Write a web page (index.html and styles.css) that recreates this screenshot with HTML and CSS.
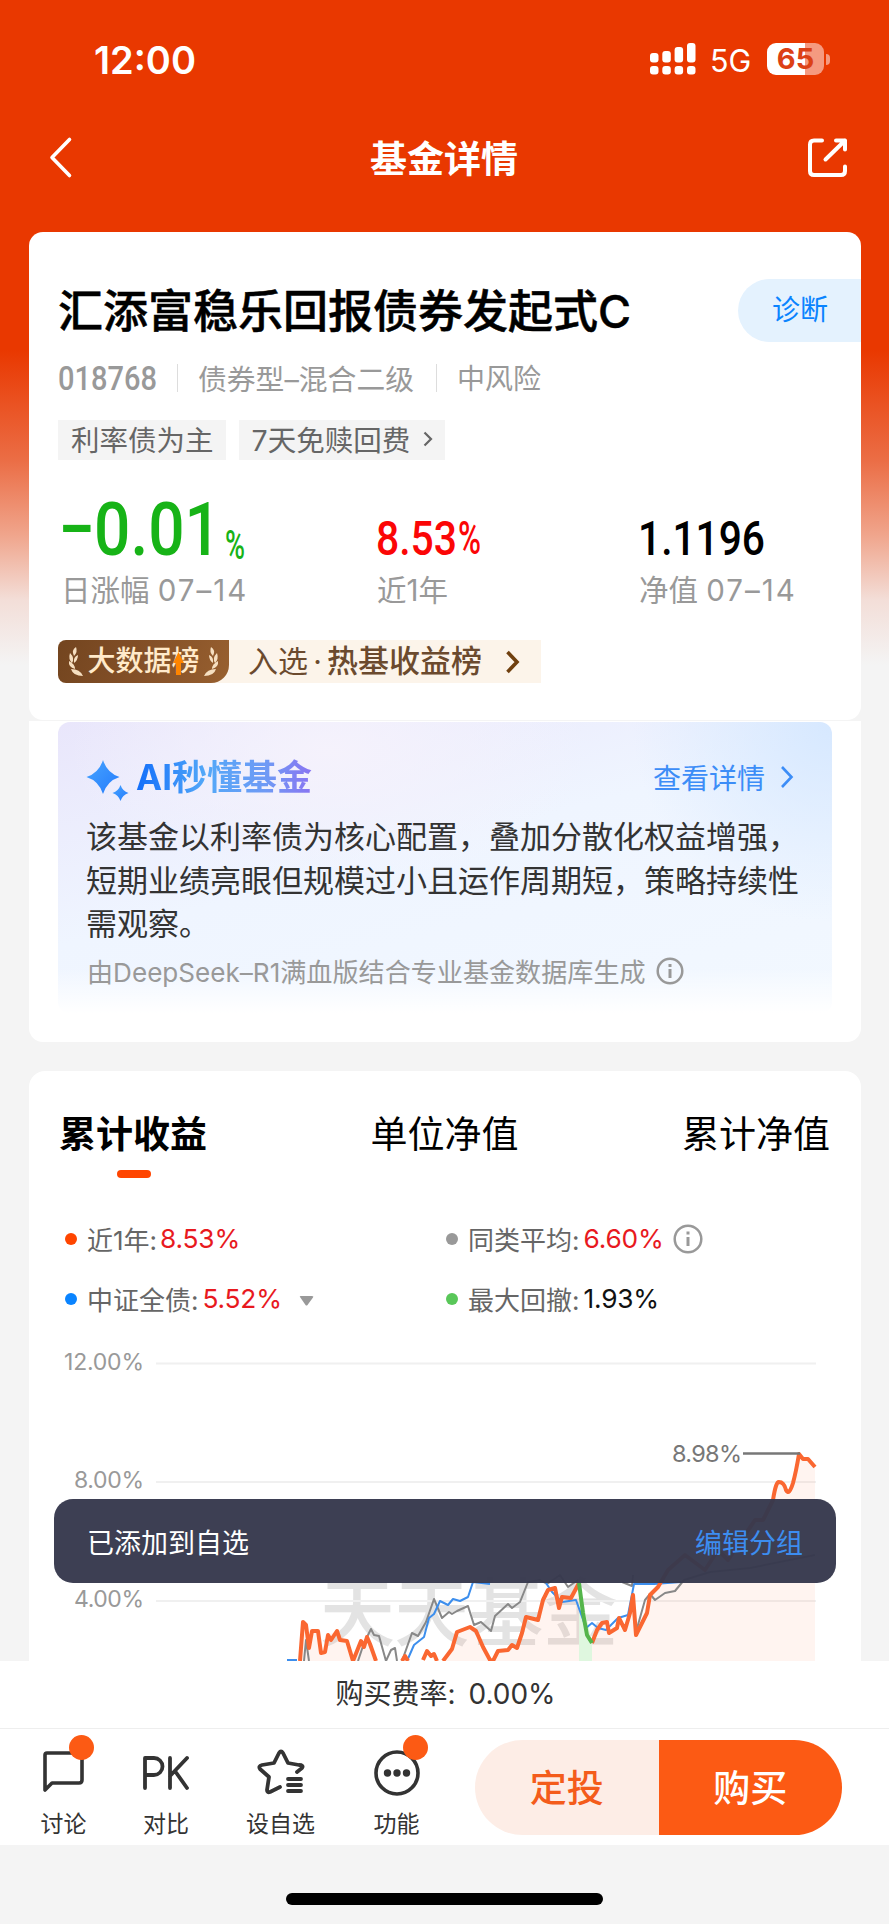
FILE: index.html
```html
<!DOCTYPE html>
<html lang="zh-CN">
<head>
<meta charset="utf-8">
<title>基金详情</title>
<link rel="stylesheet" href="styles.css">
</head>
<body>
<div class="page">
  <header class="header">
    <div class="status">
      <span class="clock">12:00</span>
      <svg class="signal" width="46" height="34" viewBox="0 0 46 34" fill="#fff">
        <rect x="0" y="11" width="8.500" height="9.500" rx="3"/><rect x="12.300" y="9" width="8.500" height="11.500" rx="3"/><rect x="24.600" y="5" width="8.500" height="15.500" rx="3"/><rect x="37" y="1" width="8.500" height="19.500" rx="3"/>
        <rect x="0" y="24" width="8.500" height="8.500" rx="3"/><rect x="12.300" y="24" width="8.500" height="8.500" rx="3"/><rect x="24.600" y="24" width="8.500" height="8.500" rx="3"/><rect x="37" y="24" width="8.500" height="8.500" rx="3"/>
      </svg>
      <span class="network">5G</span>
      <span class="battery">65</span><span class="battery-nub"></span>
    </div>
    <div class="nav">
      <svg class="back" width="24" height="42" viewBox="0 0 24 42" fill="none" stroke="#fff" stroke-width="3.600" stroke-linecap="round" stroke-linejoin="round"><path d="M20.500 2.500 3 20.500 20.500 38.500"/></svg>
      <h1>基金详情</h1>
      <svg class="share" width="42" height="42" viewBox="0 0 42 42" fill="none" stroke="#fff" stroke-width="4" stroke-linecap="round" stroke-linejoin="round"><path d="M15 3.500H7Q3 3.500 3 7.500V34Q3 38 7 38H34Q38 38 38 34V29.500"/><path d="M29 3.500H38V12.500M38 3.500 18.500 22.500"/></svg>
    </div>
  </header>

  <main>
    <section class="card summary">
      <div class="name-row"><h2>汇添富稳乐回报债券发起式C</h2><span class="diagnose">诊断</span></div>
      <div class="meta">
        <svg width="99" height="40"><text class="din" x="0" y="32" font-size="34" fill="#999" textLength="99" lengthAdjust="spacingAndGlyphs">018768</text></svg>
        <i></i><span class="kind">债券型–混合二级</span><i></i><span>中风险</span>
      </div>
      <div class="tags">
        <span class="tag">利率债为主</span>
        <span class="tag">7天免赎回费<svg width="10" height="16" viewBox="0 0 10 16" fill="none" stroke="#666" stroke-width="2.200"><path d="M1.500 1.500 8 8 1.500 14.500"/></svg></span>
      </div>
      <div class="stats">
        <div><svg width="190" height="110"><g class="din" fill="#17b317"><text x="-4" y="92" font-size="76" textLength="36" lengthAdjust="spacingAndGlyphs">-</text><text x="31" y="95" font-size="75" textLength="127" lengthAdjust="spacingAndGlyphs">0.01</text><text x="162" y="99" font-size="41" textLength="20" lengthAdjust="spacingAndGlyphs">%</text></g></svg><p>日涨幅 <span>07–14</span></p></div>
        <div><svg width="190" height="110"><g class="din" fill="#fb0606"><text x="-1" y="95" font-size="49" textLength="81" lengthAdjust="spacingAndGlyphs">8.53</text><text x="81" y="94" font-size="47" textLength="23" lengthAdjust="spacingAndGlyphs">%</text></g></svg><p>近1年</p></div>
        <div><svg width="190" height="110"><text class="din" x="-1" y="95" font-size="49" fill="#000" textLength="127" lengthAdjust="spacingAndGlyphs">1.1196</text></svg><p>净值 <span>07–14</span></p></div>
      </div>
      <div class="rank">
        <div class="rank-badge">
          <svg width="14" height="30" viewBox="0 0 14 30" fill="#f6dfc0"><path d="M7 0Q2 3 5 9 9 5 7 0ZM1 6Q-1 12 3 16 6 11 1 6ZM9 8Q4 10 5 16 9 13 9 8ZM0 14Q-1 20 6 22 6 17 0 14ZM2 22Q4 29 14 29 11 22 2 22Z"/></svg>
          <span>大数据榜</span>
          <svg class="arrow-up" width="11" height="23" viewBox="0 0 11 23" fill="#ff8500"><path d="M5.500 0 11 11H8V23H3V11H0Z"/></svg>
          <svg class="flip" width="14" height="30" viewBox="0 0 14 30" fill="#f6dfc0"><path d="M7 0Q2 3 5 9 9 5 7 0ZM1 6Q-1 12 3 16 6 11 1 6ZM9 8Q4 10 5 16 9 13 9 8ZM0 14Q-1 20 6 22 6 17 0 14ZM2 22Q4 29 14 29 11 22 2 22Z"/></svg>
        </div>
        <span class="rank-in">入选</span><span class="rank-dot">·</span><b>热基收益榜</b>
        <svg class="rank-go" width="15" height="24" viewBox="0 0 15 24" fill="none" stroke="#70400f" stroke-width="3.600"><path d="M2.500 2 12 12 2.500 22"/></svg>
      </div>
    </section>

    <section class="ai-card">
      <div class="ai-panel">
        <div class="ai-head">
          <svg width="44" height="44" viewBox="0 0 44 44"><defs><linearGradient id="spark" x1="0" y1="0" x2="1" y2="1"><stop offset="0" stop-color="#47a4ff"/><stop offset="1" stop-color="#247bfc"/></linearGradient></defs><g fill="url(#spark)"><path d="M16 0Q20 13 32.500 17 20 21 16 34 12 21-.500 17 12 13 16 0Z"/><path d="M33.500 25Q35.500 31 41.500 33 35.500 35 33.500 41 31.500 35 25.500 33 31.500 31 33.500 25Z"/></g></svg>
          <h3>AI秒懂基金</h3>
          <a>查看详情</a>
          <svg class="ai-go" width="14" height="24" viewBox="0 0 14 24" fill="none" stroke="#3c8df7" stroke-width="2.600"><path d="M2 2 11.500 12 2 22"/></svg>
        </div>
        <p class="ai-text">该基金以利率债为核心配置，叠加分散化权益增强，<br>短期业绩亮眼但规模过小且运作周期短，策略持续性<br>需观察。</p>
        <p class="ai-source"><span>由DeepSeek–R1满血版结合专业基金数据库生成</span><svg width="28" height="28" viewBox="0 0 28 28"><circle cx="14" cy="14" r="12.300" fill="none" stroke="#999" stroke-width="2.500"/><path d="M14 12v9M14 7v3" stroke="#999" stroke-width="3"/></svg></p>
      </div>
    </section>

    <section class="chart-card">
      <nav class="tabs"><b>累计收益</b><span>单位净值</span><span>累计净值</span></nav>
      <div class="legend">
        <div><i class="dot orange"></i>近1年:<em class="v1">8.53%</em></div>
        <div><i class="dot gray"></i>同类平均:<em class="v3">6.60%</em><svg width="30" height="30" viewBox="0 0 30 30"><circle cx="15" cy="15" r="13.300" fill="none" stroke="#999" stroke-width="2.500"/><path d="M15 13v9M15 7.500v3" stroke="#999" stroke-width="3"/></svg></div>
        <div><i class="dot blue"></i>中证全债:<em class="v2">5.52%</em><svg class="caret" width="15" height="10"><path d="M1 1Q0 0 2 0H13Q15 0 14 1.500L8.500 9Q7.500 10 6.500 9Z" fill="#999"/></svg></div>
        <div><i class="dot green"></i>最大回撤:<em class="v4">1.93%</em></div>
      </div>
      <svg class="chart" width="832" height="332" viewBox="29 1329 832 332">
        <text class="watermark" x="320" y="1640" font-size="75" textLength="298">天天基金</text>
        <path stroke="#f0f0f0" stroke-width="2" d="M156 1363.500H816M156 1482H816M156 1601H816"/>
        <path fill="#ff6a30" fill-opacity=".07" d="M300 1661 303 1621 309 1648 312 1631 318 1631 321 1653 328 1635 337 1631 347 1641 353 1661 361 1641 367 1637 376 1661ZM443 1661 452 1649 457 1632 470 1627 490 1661 498 1651 517 1648 526 1617 538 1620 548 1590 559 1608 579 1583 592 1643 602 1623 625 1630 633 1595 636 1635 650 1595 668 1570 685 1555 705 1570 718 1550 755 1520 773 1500 778 1482 788 1493 799 1454 815 1467V1661Z"/>
        <path fill="#dff7df" d="M579 1583 592 1643V1661H579Z"/>
        <g fill="none" stroke-linejoin="round">
          <path stroke="#888" stroke-width="2" d="M304 1661 306 1640 309 1661M358 1661 364 1643 371 1629 374 1635 379 1636 386 1661 391 1650 395 1648 397 1661M402 1661 412 1633 418 1636 426 1622 434 1599 442 1618 449 1612 452 1614 457 1611 468 1606 474 1625 481 1622 491 1631 495 1616 508 1604 512 1608 520 1602 528 1582 540 1580 547 1584 560 1575 568 1587 578 1580M622 1582 632 1586 633 1575M636 1632 645 1600 650 1594 655 1600 665 1593 675 1591 684 1580 710 1572 750 1568 815 1555"/>
          <path stroke="#3c8eed" stroke-width="2" d="M287 1660 297 1660M407 1661 414 1645 424 1637 429 1618 434 1614 440 1601 448 1605 453 1599 460 1601 468 1597 473 1582 490 1584M546 1583 552 1592 562 1602 576 1600 586 1628 592 1623 598 1628 606 1630 618 1618 628 1615 634 1584 654 1584 681 1582"/>
          <path stroke="#fa6731" stroke-width="4" d="M300 1661 303 1622 306 1625 309 1648 312 1631 318 1631 321 1653 325 1652 328 1635 331 1640 337 1631 340 1640 347 1641 353 1661 361 1641 364 1647 367 1637 370 1644 376 1661M402 1661 405 1656 408 1661M423 1660 427 1651 431 1656 434 1654 437 1661M443 1661 452 1649 457 1632 470 1627 476 1631 483 1647 490 1660 493 1661 498 1651 508 1650 512 1645 517 1648 522 1633 526 1617 538 1620 543 1600 548 1590 555 1588 559 1608 562 1597 571 1598 579 1583M592 1643 597 1630 602 1623 607 1622 609 1633 617 1628 619 1618 625 1630 630 1613 633 1595 636 1635 647 1613 650 1595 658 1587 668 1570 685 1555 705 1570 718 1550 728 1560 755 1520 763 1520 773 1500Q776 1481 779 1482 784 1482 786 1490 789 1496 793 1483 796 1472 799 1454L803 1459 808 1459 815 1467"/>
          <path stroke="#54b54b" stroke-width="4" d="M579 1583 583 1613 587 1635 592 1643"/>
          <path stroke="#777" stroke-width="2.400" d="M743 1453.500H800"/>
        </g>
        <g class="axis"><text x="64" y="1370" textLength="80">12.00%</text><text x="74" y="1488" textLength="70">8.00%</text><text x="74" y="1607" textLength="70">4.00%</text></g>
        <text class="peak" x="672" y="1462" textLength="70">8.98%</text>
      </svg>
      <div class="toast"><span>已添加到自选</span><a>编辑分组</a></div>
    </section>
  </main>

  <footer>
    <div class="fee">购买费率:<span>0.00%</span></div>
    <div class="actions">
      <div class="action talk"><svg width="42" height="46" viewBox="0 0 42 46" fill="none" stroke="#333" stroke-width="3.600" stroke-linejoin="round"><path d="M4 3H36Q39 3 39 6V30Q39 33 36 33H9L2 40V5Q2 3 4 3Z"/></svg><i class="badge"></i><span>讨论</span></div>
      <div class="action pk"><svg width="48" height="46" viewBox="0 0 48 46" fill="none" stroke="#333" stroke-width="3.800" stroke-linecap="round" stroke-linejoin="round"><path d="M3 38V8H12A8.500 8.500 0 0 1 12 25H3M28 8V38M45 8 28 26M33 21 45 38"/></svg><span>对比</span></div>
      <div class="action fav"><svg width="48" height="46" viewBox="0 0 48 46" fill="none" stroke="#333" stroke-width="3.800" stroke-linecap="round" stroke-linejoin="round"><path d="M40 22 45 18Q47 15 42 15L31 13 26 3Q24 0 22 3L17 13 5 15Q1 16 3 19L12 27 10 40Q10 43 13 42L23 37M31 29H44M31 35H44M31 41H44"/></svg><span>设自选</span></div>
      <div class="action more"><svg width="48" height="46" viewBox="0 0 48 46" fill="none" stroke="#333" stroke-width="3.600"><circle cx="24" cy="23" r="21"/><g fill="#333" stroke="none"><circle cx="14.500" cy="23" r="3.700"/><circle cx="24" cy="23" r="3.700"/><circle cx="33.500" cy="23" r="3.700"/></g></svg><i class="badge"></i><span>功能</span></div>
      <div class="buttons"><span>定投</span><span class="buy">购买</span></div>
    </div>
    <div class="home"><i></i></div>
  </footer>
</div>
</body>
</html>
```

FILE: styles.css
```css
* { box-sizing: border-box; margin: 0; padding: 0; }
body { width: 889px; height: 1924px; overflow: hidden; background: #f4f4f4; font-family: Inter, "Noto Sans CJK SC", sans-serif; color: #333; }
svg { display: block; flex: none; overflow: visible; }
.chart { overflow: hidden; }
i, em { font-style: normal; }
span, h1, h2, h3, b, a, p { white-space: nowrap; }
.page { height: 1924px; display: flex; flex-direction: column; background: linear-gradient(180deg, #e93800 0, #e93800 350px, #eb6d45 460px, #f0a58c 535px, #f3ded8 600px, #f4f4f4 665px); }
.din { font-family: Roboto, sans-serif; font-weight: 500; }

.header { height: 232px; color: #fff; }
.status { height: 118px; padding-left: 94px; display: flex; align-items: center; }
.clock { width: 556px; font-size: 38px; font-weight: 600; padding-top: 1px; }
.network { width: 57px; margin-left: 14px; font-size: 30.5px; padding-top: 2px; }
.battery { width: 57px; height: 32px; border-radius: 9px; background: linear-gradient(90deg, #fff 66%, #f59a80 66%); color: #dc4015; font-size: 29px; font-weight: 700; line-height: 32px; text-align: center; }
.battery-nub { width: 4px; height: 11px; margin-left: 2px; border-radius: 0 5px 5px 0; background: #f59a80; }
.nav { height: 83px; padding: 0 40px 0 49px; display: flex; align-items: center; justify-content: space-between; }
.nav h1 { font-size: 37px; font-weight: 600; line-height: 50px; margin-left: 8px; }
.back, .share { margin-top: -4px; }

main { height: 1429px; overflow: hidden; }
.card, .ai-card, .chart-card { width: 832px; margin-left: 29px; background: #fff; }
.summary { height: 488px; padding: 44px 0 0 29px; border-radius: 14px; }
.name-row { height: 72px; display: flex; justify-content: space-between; align-items: center; }
.name-row h2 { font-size: 45px; line-height: 60px; font-weight: 500; color: #000; -webkit-text-stroke: .5px #000; }
.diagnose { width: 123px; height: 63px; margin-top: -3px; padding-left: 34px; border-radius: 32px 0 0 32px; background: #e4f2fe; color: #0a84ff; font-size: 28px; line-height: 62px; }
.meta { height: 60px; display: flex; align-items: center; font-size: 28px; color: #999; }
.meta i { width: 1px; height: 28px; margin: 0 20px; background: #ddd; }
.meta span { margin-top: -2px; }
.meta .kind { width: 218px; font-size: 28.8px; }
.tags { margin-top: 12px; display: flex; gap: 13px; }
.tag { height: 40px; padding: 0 12px 3px 13px; display: flex; align-items: center; gap: 13px; background: #f4f4f4; color: #666; font-size: 28.5px; }
.stats { display: grid; grid-template-columns: 314px 262px 190px; padding-left: 5px; }
.stats > div:first-child p { margin-left: -2px; }
.stats p { height: 41px; line-height: 41px; font-size: 29.5px; color: #999; }
.stats p span { letter-spacing: 2px; }
.rank { width: 483px; height: 43px; margin-top: 29px; display: flex; align-items: center; background: #fcf4ea; color: #6b4a2e; font-size: 30px; line-height: 40px; border-radius: 7px 0 0 7px; }
.rank > span, .rank > b { margin-top: -1px; }
.rank-badge { position: relative; width: 171px; height: 43px; display: flex; align-items: center; justify-content: center; gap: 4px; border-radius: 8px 0 18px 8px; background: linear-gradient(110deg, #73451f, #845028 50%, #98602f); color: #ffeacb; font-size: 28px; font-weight: 500; }
.rank-badge span { margin-top: -2px; }
.arrow-up { position: absolute; left: 115px; top: 12px; }
.flip { transform: scaleX(-1); }
.rank-in { margin-left: 19px; }
.rank-dot { width: 19px; text-align: center; }
.rank b { font-size: 31px; font-weight: 500; }
.rank-go { margin-left: 23px; }

.ai-card { height: 321px; margin-top: 1px; padding: 1px 29px 0; border-radius: 0 0 14px 14px; }
.ai-panel { height: 291px; padding: 18px 0 0 29px; border-radius: 12px; background: linear-gradient(0deg, #fff 0, #fff0 45px), radial-gradient(circle at 100% 0, #d6e8ff, #d6e8ff00 200px), radial-gradient(ellipse at 35% 10%, #f5f2fc, #f5f2fc00 260px), linear-gradient(165deg, #e9e6fb, #eff5ff 45%, #f2f8ff); }
.ai-head { height: 74px; display: flex; align-items: center; }
.ai-head svg:first-child { margin-top: 9px; }
.ai-head h3 { width: 522px; margin-left: 5px; font-size: 35px; line-height: 50px; font-weight: 700; color: transparent; background: linear-gradient(90deg, #126efa, #53a8f8 70px, #6f9af5 130px, #8876f2 174px); background-clip: text; -webkit-background-clip: text; }
.ai-head a { margin-left: -5px; font-size: 28px; color: #3c8df7; }
.ai-go { margin-left: 15px; }
.ai-text { margin-left: -1px; padding-top: 1px; font-size: 31px; line-height: 43.5px; color: #333; }
.ai-source { height: 51px; display: flex; align-items: center; gap: 10px; color: #999; font-size: 26.1px; }

.chart-card { position: relative; height: 590px; margin-top: 29px; padding-top: 37px; border-radius: 16px 16px 0 0; }
.tabs { height: 101px; padding: 0 31px 0 30px; display: flex; justify-content: space-between; font-size: 37px; line-height: 54px; color: #000; }
.tabs b { position: relative; font-weight: 700; }
.tabs b::after { content: ""; position: absolute; left: 58px; top: 62px; width: 34px; height: 8px; border-radius: 4px; background: #ff4500; }
.legend { height: 120px; padding-left: 36px; display: grid; grid-template-columns: 381px 1fr; grid-auto-rows: 60px; }
.legend div { display: flex; align-items: center; font-size: 26px; color: #666; padding-bottom: 1px; }
.dot { width: 12px; height: 12px; margin-right: 10px; border-radius: 50%; }
.orange { background: #ff4500; } .gray { background: #999; } .blue { background: #0a84ff; } .green { background: #59c759; }
.legend em { margin-left: 4px; font-size: 26.3px; letter-spacing: -.2px; color: #e8191e; }
.legend .v1 { margin-left: 3px; }
.legend .v4 { color: #111; }
.legend svg { margin-left: 9px; }
.legend .caret { margin: 4px 0 0 17px; }
.axis { font-size: 23px; fill: #999; }
.peak { font-size: 23.500px; fill: #777; }
.watermark { font-weight: 500; fill: #e3e3e3; }
.toast { position: absolute; left: 25px; top: 428px; width: 782px; height: 84px; padding: 0 33px; border-radius: 19px; background: rgba(55, 57, 77, .97); display: flex; align-items: center; justify-content: space-between; font-size: 27px; color: #fff; }
.toast a { color: #3c8df0; }

footer { background: #fff; }
.fee { height: 68px; padding: 12px 0 0 2px; border-bottom: 1px solid #eee; display: flex; justify-content: center; gap: 13px; font-size: 28px; line-height: 42px; }
.actions { position: relative; height: 116px; padding-top: 11px; display: flex; }
.action { position: relative; width: 116px; height: 100px; padding-top: 10px; display: flex; flex-direction: column; align-items: center; font-size: 23px; line-height: 30px; }
.action span { margin-top: 13px; }
.talk { width: 127px; }
.pk { width: 78px; }
.fav { width: 151px; }
.more { width: 81px; }
.badge { position: absolute; right: 33px; top: -5px; width: 25px; height: 25px; border-radius: 50%; background: #fc5a14; }
.more .badge { right: 9px; }
.buttons { width: 367px; height: 95px; margin-left: auto; margin-right: 47px; display: flex; border-radius: 48px; overflow: hidden; }
.buttons span { flex: 1; background: #fdede6; color: #f45c1b; font-size: 37px; font-weight: 500; line-height: 97px; text-align: center; }
.buttons .buy { background: #fc5a14; color: #fff; }
.home { height: 79px; padding-top: 48px; background: #f4f4f4; }
.home i { display: block; width: 317px; height: 12px; margin-left: 286px; border-radius: 6px; background: #000; }
```
